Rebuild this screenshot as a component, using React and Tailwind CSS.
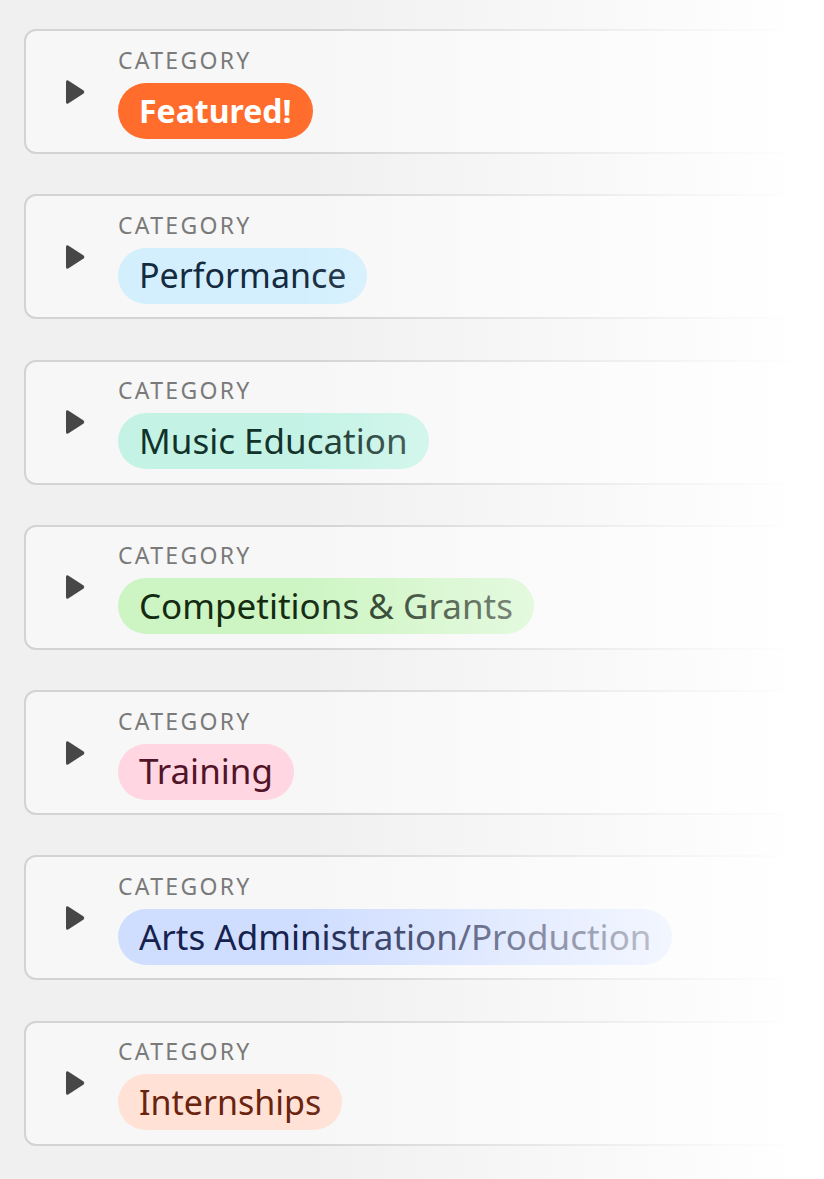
const categories = [
  { label: 'Featured!', chip: 'bg-[#ff6c2b] text-white font-bold text-[32px]' },
  { label: 'Performance', chip: 'bg-[#d3effd] text-[#142a3e] text-[34px]' },
  { label: 'Music Education', chip: 'bg-[#c4f3e6] text-[#12332b] text-[35px]' },
  { label: 'Competitions & Grants', chip: 'bg-[#cdf5c3] text-[#142b12] text-[35px]' },
  { label: 'Training', chip: 'bg-[#ffd6e1] text-[#521428] text-[35px]' },
  { label: 'Arts Administration/Production', chip: 'bg-[#cfddff] text-[#16224d] text-[35px]' },
  { label: 'Internships', chip: 'bg-[#ffe1d6] text-[#6a230e] text-[34px]' },
];

function Caret() {
  return (
    <svg width="21" height="28" viewBox="0 0 21 28" className="shrink-0">
      <path
        d="M3.2 2.6 L18.6 12.6 Q20 14 18.6 15.4 L3.2 25.4 Q1 26.6 1 24 L1 4 Q1 1.4 3.2 2.6 Z"
        fill="#474747"
      />
    </svg>
  );
}

function CategoryCard({ label, chip }) {
  return (
    <div className="flex h-[125px] w-[900px] shrink-0 items-center gap-[32px] rounded-[12px] border-2 border-[#d3d3d3] bg-[#f7f7f7] pl-[39px]">
      <Caret />
      <div className="flex flex-col items-start">
        <span className="text-[23px] leading-[31px] tracking-[0.1em] text-[#7a7a7a]">CATEGORY</span>
        <span className={`mt-[7px] flex h-[56px] items-center rounded-full px-[21px] ${chip}`}>
          {label}
        </span>
      </div>
    </div>
  );
}

export default function App() {
  return (
    <div className="relative h-[1179px] w-[824px] overflow-hidden bg-[#f0f0f0] font-['Noto_Sans',sans-serif]">
      <div className="flex flex-col gap-[40.3px] pl-[24px] pt-[29px]">
        {categories.map((c) => (
          <CategoryCard key={c.label} {...c} />
        ))}
      </div>
      <div className="pointer-events-none absolute inset-0 bg-[linear-gradient(to_right,rgba(255,255,255,0)_300px,#ffffff_800px)]" />
    </div>
  );
}
